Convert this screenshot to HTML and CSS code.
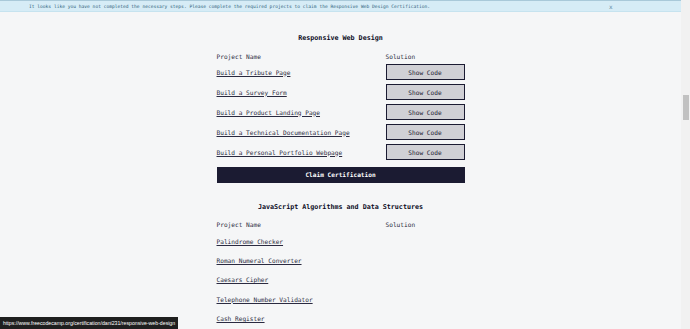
FILE: index.html
```html
<!DOCTYPE html>
<html lang="en">

<head>
    <meta charset="UTF-8">
    <meta name="viewport" content="width=device-width, initial-scale=1.0">
    <title>Certification</title>
    <link rel="stylesheet" href="styles.css">
</head>

<body>
    <div class="window">
        <div class="page">
            <!-- Warning banner -->
            <div class="alert">
                <span class="alert-text">It looks like you have not completed the necessary steps. Please complete the required projects to claim the Responsive Web Design Certification.</span>
                <span class="alert-close">x</span>
            </div>

            <div class="cert-container">
                <!-- Responsive Web Design -->
                <section class="cert-block first">
                    <h2 class="cert-title">Responsive Web Design</h2>
                    <div class="project-row head">
                        <div class="project-name">Project Name</div>
                        <div class="solution">Solution</div>
                    </div>
                    <div class="project-row">
                        <a class="project-link" href="#">Build a Tribute Page</a>
                        <button class="show-code">Show Code</button>
                    </div>
                    <div class="project-row">
                        <a class="project-link" href="#">Build a Survey Form</a>
                        <button class="show-code">Show Code</button>
                    </div>
                    <div class="project-row">
                        <a class="project-link" href="#">Build a Product Landing Page</a>
                        <button class="show-code">Show Code</button>
                    </div>
                    <div class="project-row">
                        <a class="project-link" href="#">Build a Technical Documentation Page</a>
                        <button class="show-code">Show Code</button>
                    </div>
                    <div class="project-row">
                        <a class="project-link" href="#">Build a Personal Portfolio Webpage</a>
                        <button class="show-code">Show Code</button>
                    </div>
                    <button class="claim-btn">Claim Certification</button>
                </section>

                <!-- JavaScript Algorithms and Data Structures -->
                <section class="cert-block second">
                    <h2 class="cert-title">JavaScript Algorithms and Data Structures</h2>
                    <div class="project-row head">
                        <div class="project-name">Project Name</div>
                        <div class="solution">Solution</div>
                    </div>
                    <div class="project-row small">
                        <a class="project-link" href="#">Palindrome Checker</a>
                    </div>
                    <div class="project-row small">
                        <a class="project-link" href="#">Roman Numeral Converter</a>
                    </div>
                    <div class="project-row small">
                        <a class="project-link" href="#">Caesars Cipher</a>
                    </div>
                    <div class="project-row small">
                        <a class="project-link" href="#">Telephone Number Validator</a>
                    </div>
                    <div class="project-row small">
                        <a class="project-link" href="#">Cash Register</a>
                    </div>
                </section>
            </div>
        </div>

        <!-- Fake scrollbar -->
        <div class="scrollbar">
            <div class="scroll-thumb"></div>
        </div>
    </div>

    <!-- Browser link preview -->
    <div class="status-bar">https://www.freecodecamp.org/certification/dani231/responsive-web-design</div>
</body>

</html>
```

FILE: styles.css
```css
/* Page */
html,
body {
    margin: 0;
    height: 100%;
    overflow: hidden;
}

body {
    background-color: #f5f6f7;
    font-family: "DejaVu Sans Mono", "Liberation Mono", monospace;
    color: #0a0a23;
}

.window {
    display: flex;
    height: 329px;
}

.page {
    flex: 1;
}

/* Warning banner */
.alert {
    height: 12px;
    box-sizing: border-box;
    background-color: #d6ecf6;
    border-top: 1px solid #a9c9d9;
    border-bottom: 1px solid #c6e3ef;
    color: #2f5f7a;
    font-size: 4.6px;
    display: flex;
    align-items: center;
    padding-left: 29px;
}

.alert-text {
    flex: 1;
}

.alert-close {
    width: 72px;
    font-size: 6px;
    color: #5a8aa3;
}

/* Certificate blocks */
.cert-container {
    width: 248px;
    margin: 0 auto;
}

.cert-block.first {
    padding-top: 20px;
}

.cert-block.second {
    padding-top: 18px;
}

.cert-title {
    margin: 0;
    height: 12px;
    line-height: 12px;
    font-size: 6.7px;
    font-weight: bold;
    text-align: center;
}

.project-row {
    display: flex;
    align-items: center;
    justify-content: space-between;
    height: 20px;
    font-size: 6.15px;
}

.project-row.head {
    height: 12px;
    margin-top: 6px;
    color: #2a2a40;
}

.second .project-row.head {
    height: 14px;
    margin-top: 5px;
}

.project-row.small {
    height: 19.3px;
}

.solution {
    width: 79px;
}

.project-link,
.project-link:visited {
    color: #2a2a40;
    text-decoration: underline;
    text-decoration-color: #2a2a40;
}

.show-code {
    width: 79px;
    height: 16px;
    box-sizing: border-box;
    border: 1.5px solid #1b1b32;
    background-color: #d0d0d5;
    color: #1b1b32;
    font-family: inherit;
    font-size: 6.15px;
    padding: 0;
}

.claim-btn {
    width: 100%;
    height: 16px;
    margin-top: 1px;
    border: none;
    background-color: #1b1b32;
    color: #fff;
    font-family: inherit;
    font-size: 6.15px;
    font-weight: bold;
    padding: 0;
}

/* Scrollbar */
.scrollbar {
    width: 9px;
    background-color: #f1f1f1;
    position: relative;
}

.scroll-thumb {
    position: absolute;
    top: 95px;
    left: 2px;
    width: 6px;
    height: 25px;
    background-color: #c1c1c1;
}

/* Status bubble */
.status-bar {
    position: fixed;
    left: 0;
    bottom: 0;
    height: 12px;
    line-height: 12px;
    padding: 0 3px 0 3px;
    background-color: #1f1f1f;
    color: #fff;
    font-family: "Liberation Sans", Arial, sans-serif;
    font-size: 5.2px;
}
```
